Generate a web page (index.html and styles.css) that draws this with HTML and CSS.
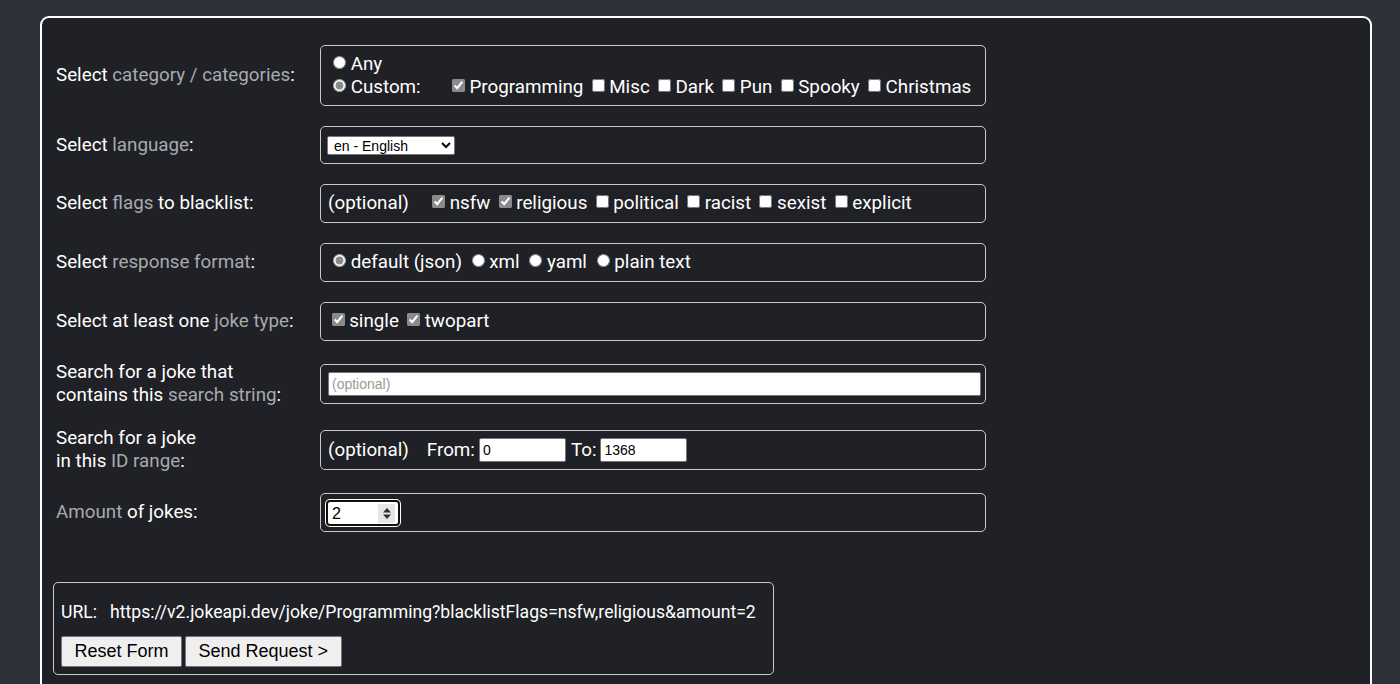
FILE: index.html
```html
<!DOCTYPE html>
<html>
<head>
<meta charset="utf-8">
<link rel="stylesheet" href="styles.css">
</head>
<body>
<div class="panel">
  <div class="form">
    <div class="label">Select <span class="hl">category / categories</span>:</div>
    <div class="box box-two">
      <div class="line"><label><input type="radio" name="cat"> Any</label></div>
      <div class="line">
        <label class="custom"><input type="radio" name="cat" checked> Custom:</label>
        <label><input type="checkbox" checked> Programming</label>
        <label><input type="checkbox"> Misc</label>
        <label><input type="checkbox"> Dark</label>
        <label><input type="checkbox"> Pun</label>
        <label><input type="checkbox"> Spooky</label>
        <label><input type="checkbox"> Christmas</label>
      </div>
    </div>

    <div class="label">Select <span class="hl">language</span>:</div>
    <div class="box box-select">
      <select class="lang"><option>en - English</option></select>
    </div>

    <div class="label">Select <span class="hl">flags</span> to blacklist:</div>
    <div class="box">
      <span class="opt">(optional)</span>
      <label><input type="checkbox" checked> nsfw</label>
      <label><input type="checkbox" checked> religious</label>
      <label><input type="checkbox"> political</label>
      <label><input type="checkbox"> racist</label>
      <label><input type="checkbox"> sexist</label>
      <label><input type="checkbox"> explicit</label>
    </div>

    <div class="label">Select <span class="hl">response format</span>:</div>
    <div class="box">
      <label><input type="radio" name="fmt" checked> default (json)</label>
      <label><input type="radio" name="fmt"> xml</label>
      <label><input type="radio" name="fmt"> yaml</label>
      <label><input type="radio" name="fmt"> plain text</label>
    </div>

    <div class="label">Select at least one <span class="hl">joke type</span>:</div>
    <div class="box">
      <label><input type="checkbox" checked> single</label>
      <label><input type="checkbox" checked> twopart</label>
    </div>

    <div class="label">Search for a joke that<br>contains this <span class="hl">search string</span>:</div>
    <div class="box box-input">
      <input type="text" class="search" placeholder="(optional)">
    </div>

    <div class="label">Search for a joke<br>in this <span class="hl">ID range</span>:</div>
    <div class="box box-input">
      <span class="opt">(optional)</span>
      <span class="from">From:</span><input type="text" class="range" value="0">
      <span class="to">To:</span><input type="text" class="range" value="1368">
    </div>

    <div class="label"><span class="hl">Amount</span> of jokes:</div>
    <div class="box box-amount">
      <span class="amount"><span class="amount-val">2</span><span class="spin"><svg width="10" height="13" viewBox="0 0 10 13"><path d="M5 1 L9 5.5 H1 Z M5 12 L9 7.5 H1 Z" fill="#333"/></svg></span></span>
    </div>
  </div>

  <div class="urlbox">
    <div class="url">URL:&nbsp;&nbsp; https://v2.jokeapi.dev/joke/Programming?blacklistFlags=nsfw,religious&amp;amount=2</div>
    <div class="buttons">
      <button class="btn">Reset Form</button>
      <button class="btn">Send Request &gt;</button>
    </div>
  </div>
</div>
</body>
</html>
```
FILE: styles.css
```css
html, body {
  margin: 0;
  padding: 0;
}
body {
  background: #2f313a;
  font-family: Roboto, "Liberation Sans", sans-serif;
  color: #ffffff;
  font-size: 18.8px;
  overflow: hidden;
  height: 684px;
}
.panel {
  margin: 16px 28px 0 40px;
  border: 2px solid #ffffff;
  border-radius: 9px;
  background: #1f2126;
  padding: 27px 14px 40px 11px;
  height: 700px;
  box-sizing: border-box;
}
.form {
  display: grid;
  grid-template-columns: 264px 666px;
  row-gap: 20px;
  align-items: center;
  padding-left: 3px;
}
.label {
  line-height: 23px;
  font-size: 18.8px;
}
.hl {
  color: #a8aaae;
}
.box {
  border: 1px solid #c9c9c9;
  border-radius: 5px;
  padding: 7px;
  height: 23px;
  line-height: 23px;
  white-space: nowrap;
}
.box-two {
  padding: 7px 7px 6px;
  height: 46px;
}
.box-select {
  padding: 9px 6px 8px;
  height: 19px;
  line-height: 19px;
}
.box-input {
  padding: 7px 4px 7px 7px;
  display: flex;
  align-items: center;
  height: 24px;
}
.box-amount {
  padding: 6px 5px 5px;
  height: 26px;
  display: flex;
  align-items: center;
}
label {
  margin-right: 0;
}
input[type="checkbox"], input[type="radio"] {
  accent-color: #8a8a8a;
  margin: 0 0 0 3.5px;
  width: 13px;
  height: 13px;
  vertical-align: 1px;
}
input[type="radio"] {
  margin-left: 5px;
}
.custom {
  margin-right: 23px;
}
.opt {
  margin-right: 15px;
}
.lang {
  font-family: "Liberation Sans", Arial, sans-serif;
  font-size: 14px;
  width: 128px;
  height: 19px;
  padding: 0 0 0 2px;
  border: 1px solid #767676;
  border-radius: 2px;
  background: #ffffff;
  color: #000;
  display: block;
}
.search {
  width: 100%;
  height: 24px;
  box-sizing: border-box;
  border: 1px solid #767676;
  border-radius: 2px;
  font-family: "Liberation Sans", Arial, sans-serif;
  font-size: 14px;
  padding: 1px 3px;
}
.search::placeholder {
  color: #9a9a9a;
}
.from {
  margin-left: 3px;
  margin-right: 4px;
}
.to {
  margin-left: 5px;
  margin-right: 4px;
}
.range {
  width: 87px;
  height: 24px;
  box-sizing: border-box;
  border: 1px solid #767676;
  border-radius: 2px;
  font-family: "Liberation Sans", Arial, sans-serif;
  font-size: 14px;
  padding: 1px 3px;
  color: #000;
}
.amount {
  display: flex;
  align-items: center;
  justify-content: space-between;
  width: 74px;
  height: 26px;
  box-sizing: border-box;
  background: #fff;
  border: 2px solid #101010;
  border-radius: 4px;
  box-shadow: 0 0 0 1px #ffffff;
  font-family: "Liberation Sans", Arial, sans-serif;
  font-size: 16px;
  color: #000;
  padding: 0 3px 0 4px;
}
.spin {
  display: flex;
  align-items: center;
  justify-content: center;
  width: 17px;
  height: 19px;
  background: #e6e6e6;
}
.urlbox {
  margin-top: 50px;
  display: inline-block;
  border: 1px solid #c9c9c9;
  border-radius: 5px;
  padding: 18px 17px 7px 7px;
}
.url {
  font-size: 17.6px;
  line-height: 23px;
}
.buttons {
  margin-top: 12px;
  display: flex;
  gap: 3px;
}
.btn {
  font-family: "Liberation Sans", Arial, sans-serif;
  font-size: 18px;
  height: 31px;
  padding: 0 12.5px;
  background: #efefef;
  border: 1px solid #767676;
  border-radius: 2px;
  color: #000;
}
```
